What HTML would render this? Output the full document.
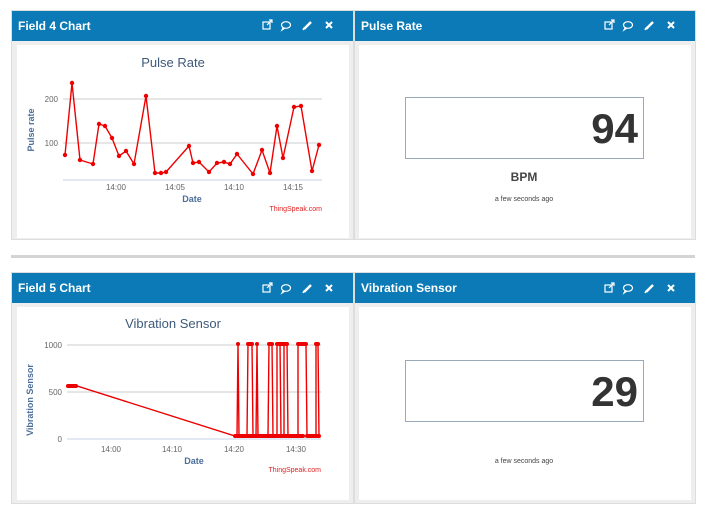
<!DOCTYPE html>
<html><head><style>
body{margin:0;width:709px;height:514px;background:#fff;position:relative;overflow:hidden;font-family:"Liberation Sans",sans-serif}
.p{position:absolute;background:#eee;border:1px solid #ddd;box-sizing:border-box}
.h{position:absolute;left:0;right:0;top:0;height:30px;background:#0b7ab6;color:#fff;font-weight:bold;font-size:12px;line-height:31px;padding-left:6px}
.w{position:absolute;background:#fff}
</style></head><body>
<div style="position:absolute;left:11px;right:14px;top:255px;height:3px;background:#d4d4d4"></div>

<div class="p" style="left:11px;top:10px;width:343px;height:230px"><div class="h">Field 4 Chart</div><div class="w" style="left:5px;top:34px;width:332px;height:193px"></div></div>
<div class="p" style="left:354px;top:10px;width:342px;height:230px"><div class="h">Pulse Rate</div><div class="w" style="left:4px;top:34px;width:332px;height:193px"></div></div>
<div class="p" style="left:11px;top:272px;width:343px;height:232px"><div class="h">Field 5 Chart</div><div class="w" style="left:5px;top:34px;width:332px;height:193px"></div></div>
<div class="p" style="left:354px;top:272px;width:342px;height:232px"><div class="h">Vibration Sensor</div><div class="w" style="left:4px;top:34px;width:332px;height:193px"></div></div>

<svg width="709" height="514" style="position:absolute;left:0;top:0" font-family="Liberation Sans, sans-serif">
<defs><g id="icons" fill="none" stroke="#fff" stroke-width="1.2">
<rect x="0" y="2" width="7" height="7"/><path d="M4 5 L9 0 M6 0 H9 V3"/>
<ellipse cx="23" cy="5" rx="4.5" ry="3.3"/><path d="M20 8 L19 10 L22 8"/>
<path d="M41 9 L48 2" stroke-width="2.5"/><path d="M40 10 L41 8" stroke-width="1.5"/>
<path d="M63 2 L69 8 M69 2 L63 8" stroke-width="2"/>
</g></defs>
<use href="#icons" x="263" y="20"/><use href="#icons" x="605" y="20"/>
<use href="#icons" x="263" y="283"/><use href="#icons" x="605" y="283"/>

<text x="173" y="67" font-size="13" fill="#3e5a7a" text-anchor="middle">Pulse Rate</text>
<line x1="63" y1="99" x2="322" y2="99" stroke="#ccc"/>
<line x1="63" y1="143" x2="322" y2="143" stroke="#ccc"/>
<line x1="63" y1="180" x2="322" y2="180" stroke="#c6d3e4"/>
<g font-size="8" fill="#666"><text x="58" y="102" text-anchor="end">200</text><text x="58" y="146" text-anchor="end">100</text>
<text x="116" y="190" text-anchor="middle">14:00</text><text x="175" y="190" text-anchor="middle">14:05</text><text x="234" y="190" text-anchor="middle">14:10</text><text x="293" y="190" text-anchor="middle">14:15</text></g>
<text x="192" y="202" font-size="9" font-weight="bold" fill="#4a6d9a" text-anchor="middle">Date</text>
<text x="34" y="130" font-size="9" font-weight="bold" fill="#4a6d9a" text-anchor="middle" transform="rotate(-90 34 130)">Pulse rate</text>
<text x="322" y="211" font-size="7" fill="#e02020" text-anchor="end">ThingSpeak.com</text>
<polyline fill="none" stroke="#e00" stroke-width="1.4" points="65,155 72,83 80,160 93,164 99,124 105,126 112,138 119,156 126,151 134,164 146,96 155,173 161,173 166,172 189,146 193,163 199,162 209,172 217,163 224,162 230,164 237,154 253,174 262,150 270,173 277,126 283,158 294,107 301,106 312,171 319,145"/>
<g fill="#e00"><circle cx="65" cy="155" r="2.2"/><circle cx="72" cy="83" r="2.2"/><circle cx="80" cy="160" r="2.2"/><circle cx="93" cy="164" r="2.2"/><circle cx="99" cy="124" r="2.2"/><circle cx="105" cy="126" r="2.2"/><circle cx="112" cy="138" r="2.2"/><circle cx="119" cy="156" r="2.2"/><circle cx="126" cy="151" r="2.2"/><circle cx="134" cy="164" r="2.2"/><circle cx="146" cy="96" r="2.2"/><circle cx="155" cy="173" r="2.2"/><circle cx="161" cy="173" r="2.2"/><circle cx="166" cy="172" r="2.2"/><circle cx="189" cy="146" r="2.2"/><circle cx="193" cy="163" r="2.2"/><circle cx="199" cy="162" r="2.2"/><circle cx="209" cy="172" r="2.2"/><circle cx="217" cy="163" r="2.2"/><circle cx="224" cy="162" r="2.2"/><circle cx="230" cy="164" r="2.2"/><circle cx="237" cy="154" r="2.2"/><circle cx="253" cy="174" r="2.2"/><circle cx="262" cy="150" r="2.2"/><circle cx="270" cy="173" r="2.2"/><circle cx="277" cy="126" r="2.2"/><circle cx="283" cy="158" r="2.2"/><circle cx="294" cy="107" r="2.2"/><circle cx="301" cy="106" r="2.2"/><circle cx="312" cy="171" r="2.2"/><circle cx="319" cy="145" r="2.2"/></g>

<text x="173" y="328" font-size="13" fill="#3e5a7a" text-anchor="middle">Vibration Sensor</text>
<line x1="67" y1="345" x2="321" y2="345" stroke="#ccc"/>
<line x1="67" y1="392" x2="321" y2="392" stroke="#ccc"/>
<line x1="67" y1="439" x2="321" y2="439" stroke="#c6d3e4"/>
<g font-size="8" fill="#666"><text x="62" y="348" text-anchor="end">1000</text><text x="62" y="395" text-anchor="end">500</text><text x="62" y="442" text-anchor="end">0</text>
<text x="111" y="452" text-anchor="middle">14:00</text><text x="172" y="452" text-anchor="middle">14:10</text><text x="234" y="452" text-anchor="middle">14:20</text><text x="296" y="452" text-anchor="middle">14:30</text></g>
<text x="194" y="464" font-size="9" font-weight="bold" fill="#4a6d9a" text-anchor="middle">Date</text>
<text x="33" y="400" font-size="9" font-weight="bold" fill="#4a6d9a" text-anchor="middle" transform="rotate(-90 33 400)">Vibration Sensor</text>
<text x="321" y="472" font-size="7" fill="#e02020" text-anchor="end">ThingSpeak.com</text>
<polyline fill="none" stroke="#e00" stroke-width="1.4" points="68,386 77,386 235,436 237,436 238,344 239,436 247,436 248,344 252,344 253,436 256,436 257,344 258,436 268,436 269,344 272,344 273,436 277,436 277,344 280,344 281,436 284,436 284,344 287,344 288,436 298,436 298,344 306,344 307,436 316,436 316,344 318,344 319,436 320,436"/>
<g fill="#e00"><rect x="66" y="384" width="12" height="4" rx="2"/><rect x="233" y="434" width="72" height="4" rx="2"/><rect x="305" y="434" width="16" height="4" rx="2"/>
<rect x="236" y="342" width="4" height="4" rx="2"/><rect x="246" y="342" width="8" height="4" rx="2"/><rect x="255" y="342" width="4" height="4" rx="2"/><rect x="267" y="342" width="7" height="4" rx="2"/><rect x="275" y="342" width="14" height="4" rx="2"/><rect x="296" y="342" width="12" height="4" rx="2"/><rect x="314" y="342" width="6" height="4" rx="2"/></g>

<rect x="405.5" y="97.5" width="238" height="61" fill="#fff" stroke="#9aa9b8"/>
<text x="638" y="143" font-size="42" font-weight="bold" fill="#333" text-anchor="end">94</text>
<text x="524" y="181" font-size="12" font-weight="bold" fill="#444" text-anchor="middle">BPM</text>
<text x="524" y="201" font-size="7" fill="#444" text-anchor="middle">a few seconds ago</text>
<rect x="405.5" y="360.5" width="238" height="61" fill="#fff" stroke="#9aa9b8"/>
<text x="638" y="406" font-size="42" font-weight="bold" fill="#333" text-anchor="end">29</text>
<text x="524" y="463" font-size="7" fill="#444" text-anchor="middle">a few seconds ago</text>
</svg>
</body></html>
